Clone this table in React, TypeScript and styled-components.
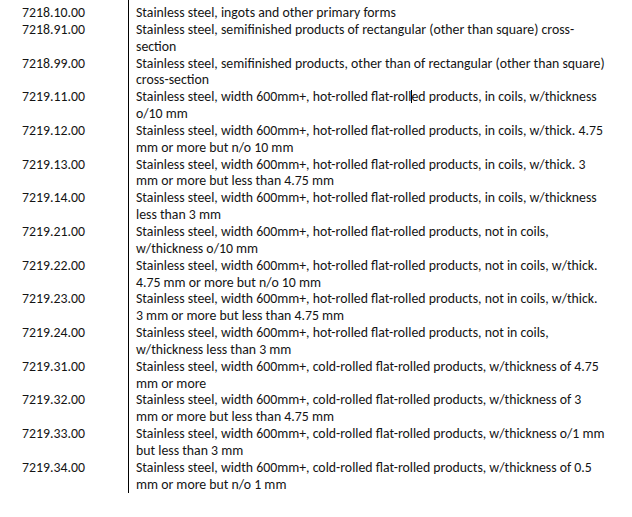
import styled, { createGlobalStyle } from "styled-components"

const rows = [
    { code: "7218.10.00", lines: ["Stainless steel, ingots and other primary forms"] },
    { code: "7218.91.00", lines: ["Stainless steel, semifinished products of rectangular (other than square) cross-", "section"] },
    { code: "7218.99.00", lines: ["Stainless steel, semifinished products, other than of rectangular (other than square)", "cross-section"] },
    { code: "7219.11.00", lines: ["Stainless steel, width 600mm+, hot-rolled flat-roll|ed products, in coils, w/thickness", "o/10 mm"] },
    { code: "7219.12.00", lines: ["Stainless steel, width 600mm+, hot-rolled flat-rolled products, in coils, w/thick. 4.75", "mm or more but n/o 10 mm"] },
    { code: "7219.13.00", lines: ["Stainless steel, width 600mm+, hot-rolled flat-rolled products, in coils, w/thick. 3", "mm or more but less than 4.75 mm"] },
    { code: "7219.14.00", lines: ["Stainless steel, width 600mm+, hot-rolled flat-rolled products, in coils, w/thickness", "less than 3 mm"] },
    { code: "7219.21.00", lines: ["Stainless steel, width 600mm+, hot-rolled flat-rolled products, not in coils,", "w/thickness o/10 mm"] },
    { code: "7219.22.00", lines: ["Stainless steel, width 600mm+, hot-rolled flat-rolled products, not in coils, w/thick.", "4.75 mm or more but n/o 10 mm"] },
    { code: "7219.23.00", lines: ["Stainless steel, width 600mm+, hot-rolled flat-rolled products, not in coils, w/thick.", "3 mm or more but less than 4.75 mm"] },
    { code: "7219.24.00", lines: ["Stainless steel, width 600mm+, hot-rolled flat-rolled products, not in coils,", "w/thickness less than 3 mm"] },
    { code: "7219.31.00", lines: ["Stainless steel, width 600mm+, cold-rolled flat-rolled products, w/thickness of 4.75", "mm or more"] },
    { code: "7219.32.00", lines: ["Stainless steel, width 600mm+, cold-rolled flat-rolled products, w/thickness of 3", "mm or more but less than 4.75 mm"] },
    { code: "7219.33.00", lines: ["Stainless steel, width 600mm+, cold-rolled flat-rolled products, w/thickness o/1 mm", "but less than 3 mm"] },
    { code: "7219.34.00", lines: ["Stainless steel, width 600mm+, cold-rolled flat-rolled products, w/thickness of 0.5", "mm or more but n/o 1 mm"] },
]

// text cursor sits inside one word, marked with "|"
function Line({ text }: { text: string }) {
    const i = text.indexOf("|")
    if (i < 0) return <DescLine>{text}</DescLine>
    return <DescLine>{text.slice(0, i)}<Caret />{text.slice(i + 1)}</DescLine>
}

export default function App() {
    return <>
        <GlobalStyle />
        <Page>
            <Table>
                <Row>
                    <Code />
                    <Desc $spacer />
                </Row>
                {rows.map((row, n) =>
                    <Row key={n}>
                        <Code>{row.code}</Code>
                        <Desc>
                            {row.lines.map((l, k) => <Line key={k} text={l} />)}
                        </Desc>
                    </Row>)}
            </Table>
        </Page>
    </>
}

const GlobalStyle = createGlobalStyle`
    html, body {
        margin: 0;
        padding: 0;
        background: #fff;
    }
    body {
        font-family: Carlito, Calibri, Lato, "Liberation Sans", sans-serif;
        color: #141414;
    }
`

const Page = styled.div`
    width: 632px;
    height: 517px;
    overflow: hidden;
    background: #fff;
`

const Table = styled.div`
    display: flex;
    flex-direction: column;
`

const Row = styled.div`
    display: grid;
    grid-template-columns: 128px 1fr;
`

const Code = styled.div`
    padding-left: 22px;
    font-size: 13.8px;
    line-height: 16.85px;
`

const Desc = styled.div<{ $spacer?: boolean }>`
    border-left: 1px solid #000;
    padding-left: 7px;
    font-size: 13.8px;
    line-height: 16.85px;
    white-space: nowrap;
    height: ${p => p.$spacer ? "5px" : "auto"};
`

const DescLine = styled.div``

const Caret = styled.span`
    display: inline-block;
    width: 1px;
    height: 13px;
    margin: 0 -1px -2px 0;
    background: #000;
`
